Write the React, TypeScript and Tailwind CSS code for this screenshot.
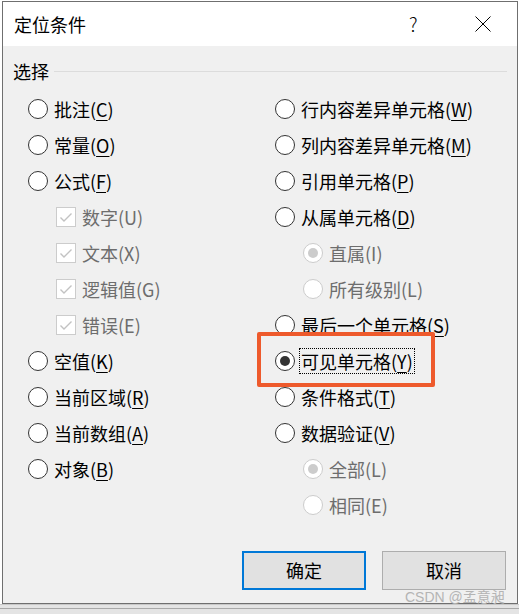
import React from "react";

const FONT = { fontFamily: '"Noto Sans CJK SC", "Noto Sans", sans-serif' };

function Label({ text, mn, disabled }: { text: string; mn: string; disabled?: boolean }) {
  return (
    <span className={`text-[18px] leading-[24px] whitespace-nowrap ${disabled ? "text-[#6d6d6d]" : "text-black"}`}>
      {text}(
      <span className={disabled ? "" : "underline underline-offset-[3px] decoration-1"}>{mn}</span>)
    </span>
  );
}

function Radio({ checked, disabled }: { checked?: boolean; disabled?: boolean }) {
  return (
    <span
      className={`w-[20px] h-[20px] rounded-full border bg-white flex items-center justify-center shrink-0 ${
        disabled ? "border-[#cccccc]" : "border-[#333333]"
      }`}
    >
      {checked && (
        <span className={`w-[10px] h-[10px] rounded-full ${disabled ? "bg-[#cccccc]" : "bg-[#333333]"}`} />
      )}
    </span>
  );
}

function Check() {
  return (
    <span className="w-[20px] h-[20px] border border-[#cccccc] bg-white flex items-center justify-center shrink-0">
      <svg width="16" height="16" viewBox="0 0 16 16">
        <path d="M2.5 8.5 L6 12 L13.5 4.5" fill="none" stroke="#c2c2c2" strokeWidth="1.4" />
      </svg>
    </span>
  );
}

type Item = {
  text: string;
  mn: string;
  kind: "radio" | "check";
  indent?: boolean;
  disabled?: boolean;
  checked?: boolean;
  focus?: boolean;
};

function Row({ it }: { it: Item }) {
  return (
    <div className={`h-[36px] flex items-center gap-[6px] ${it.indent ? "ml-[28px]" : ""}`}>
      {it.kind === "radio" ? <Radio checked={it.checked} disabled={it.disabled} /> : <Check />}
      {it.focus ? (
        <span className="h-[26px] flex items-center border border-dotted border-black px-[1px] -ml-[2px]">
          <Label text={it.text} mn={it.mn} disabled={it.disabled} />
        </span>
      ) : (
        <Label text={it.text} mn={it.mn} disabled={it.disabled} />
      )}
    </div>
  );
}

const left: Item[] = [
  { text: "批注", mn: "C", kind: "radio" },
  { text: "常量", mn: "O", kind: "radio" },
  { text: "公式", mn: "F", kind: "radio" },
  { text: "数字", mn: "U", kind: "check", indent: true, disabled: true },
  { text: "文本", mn: "X", kind: "check", indent: true, disabled: true },
  { text: "逻辑值", mn: "G", kind: "check", indent: true, disabled: true },
  { text: "错误", mn: "E", kind: "check", indent: true, disabled: true },
  { text: "空值", mn: "K", kind: "radio" },
  { text: "当前区域", mn: "R", kind: "radio" },
  { text: "当前数组", mn: "A", kind: "radio" },
  { text: "对象", mn: "B", kind: "radio" },
];

const right: Item[] = [
  { text: "行内容差异单元格", mn: "W", kind: "radio" },
  { text: "列内容差异单元格", mn: "M", kind: "radio" },
  { text: "引用单元格", mn: "P", kind: "radio" },
  { text: "从属单元格", mn: "D", kind: "radio" },
  { text: "直属", mn: "I", kind: "radio", indent: true, disabled: true, checked: true },
  { text: "所有级别", mn: "L", kind: "radio", indent: true, disabled: true },
  { text: "最后一个单元格", mn: "S", kind: "radio" },
  { text: "可见单元格", mn: "Y", kind: "radio", checked: true, focus: true },
  { text: "条件格式", mn: "T", kind: "radio" },
  { text: "数据验证", mn: "V", kind: "radio" },
  { text: "全部", mn: "L", kind: "radio", indent: true, disabled: true, checked: true },
  { text: "相同", mn: "E", kind: "radio", indent: true, disabled: true },
];

export default function App() {
  return (
    <div className="w-[519px] h-[614px] bg-white relative overflow-hidden" style={FONT}>
      <div className="ml-[2px] mt-[1px] w-[516px] h-[603px] border border-[#6f6f6f] flex flex-col">
        <div className="h-[44px] bg-white flex items-center pl-[11px] shrink-0">
          <span className="text-[18px] text-black leading-[24px]">定位条件</span>
          <span className="ml-auto text-[19px] leading-[24px] text-black font-light w-[12px] mr-[54px]">?</span>
          <svg width="16" height="16" viewBox="0 0 16 16" className="mr-[26px]">
            <path d="M0.5 0.5 L15.5 15.5 M15.5 0.5 L0.5 15.5" stroke="#000" strokeWidth="1" />
          </svg>
        </div>
        <div className="flex-1 bg-[#f0f0f0] flex flex-col">
          <div className="mt-[15px] h-[20px] flex items-center pl-[10px] pr-[10px]">
            <span className="text-[18px] leading-[24px] text-black">选择</span>
            <div className="flex-1 h-px bg-[#dcdcdc] ml-[5px]" />
          </div>
          <div className="mt-[10px] grid grid-cols-[247px_1fr] pl-[25px]">
            <div className="flex flex-col">
              {left.map((it, i) => (
                <Row key={i} it={it} />
              ))}
            </div>
            <div className="flex flex-col">
              {right.map((it, i) => (
                <Row key={i} it={it} />
              ))}
            </div>
          </div>
          <div className="mt-[28px] flex justify-end gap-[16px] pr-[11px]">
            <button className="w-[124px] h-[39px] bg-[#e1e1e1] border-2 border-[#0078d7] text-[18px] text-black flex items-center justify-center">
              确定
            </button>
            <button className="w-[124px] h-[39px] bg-[#e1e1e1] border border-[#adadad] text-[18px] text-black flex items-center justify-center">
              取消
            </button>
          </div>
        </div>
      </div>
      <div className="h-[10px] bg-[#e4e4e4] flex flex-col">
        <div className="h-[1px] bg-[#c8c8c8]" />
        <div className="h-[3px]" />
        <div className="h-[1px] bg-[#a8a8a8]" />
      </div>
      <div className="absolute left-[257px] top-[332px] w-[178px] h-[55px] border-[4px] border-[#ee5a2c] rounded-[2px]" />
      <div
        className="absolute left-[405px] top-[588px] text-[14px] leading-[18px] text-[#b4b4b4] whitespace-nowrap"
        style={{ fontFamily: '"Liberation Sans", "Noto Sans CJK SC", sans-serif' }}
      >
        CSDN @孟意昶
      </div>
    </div>
  );
}
